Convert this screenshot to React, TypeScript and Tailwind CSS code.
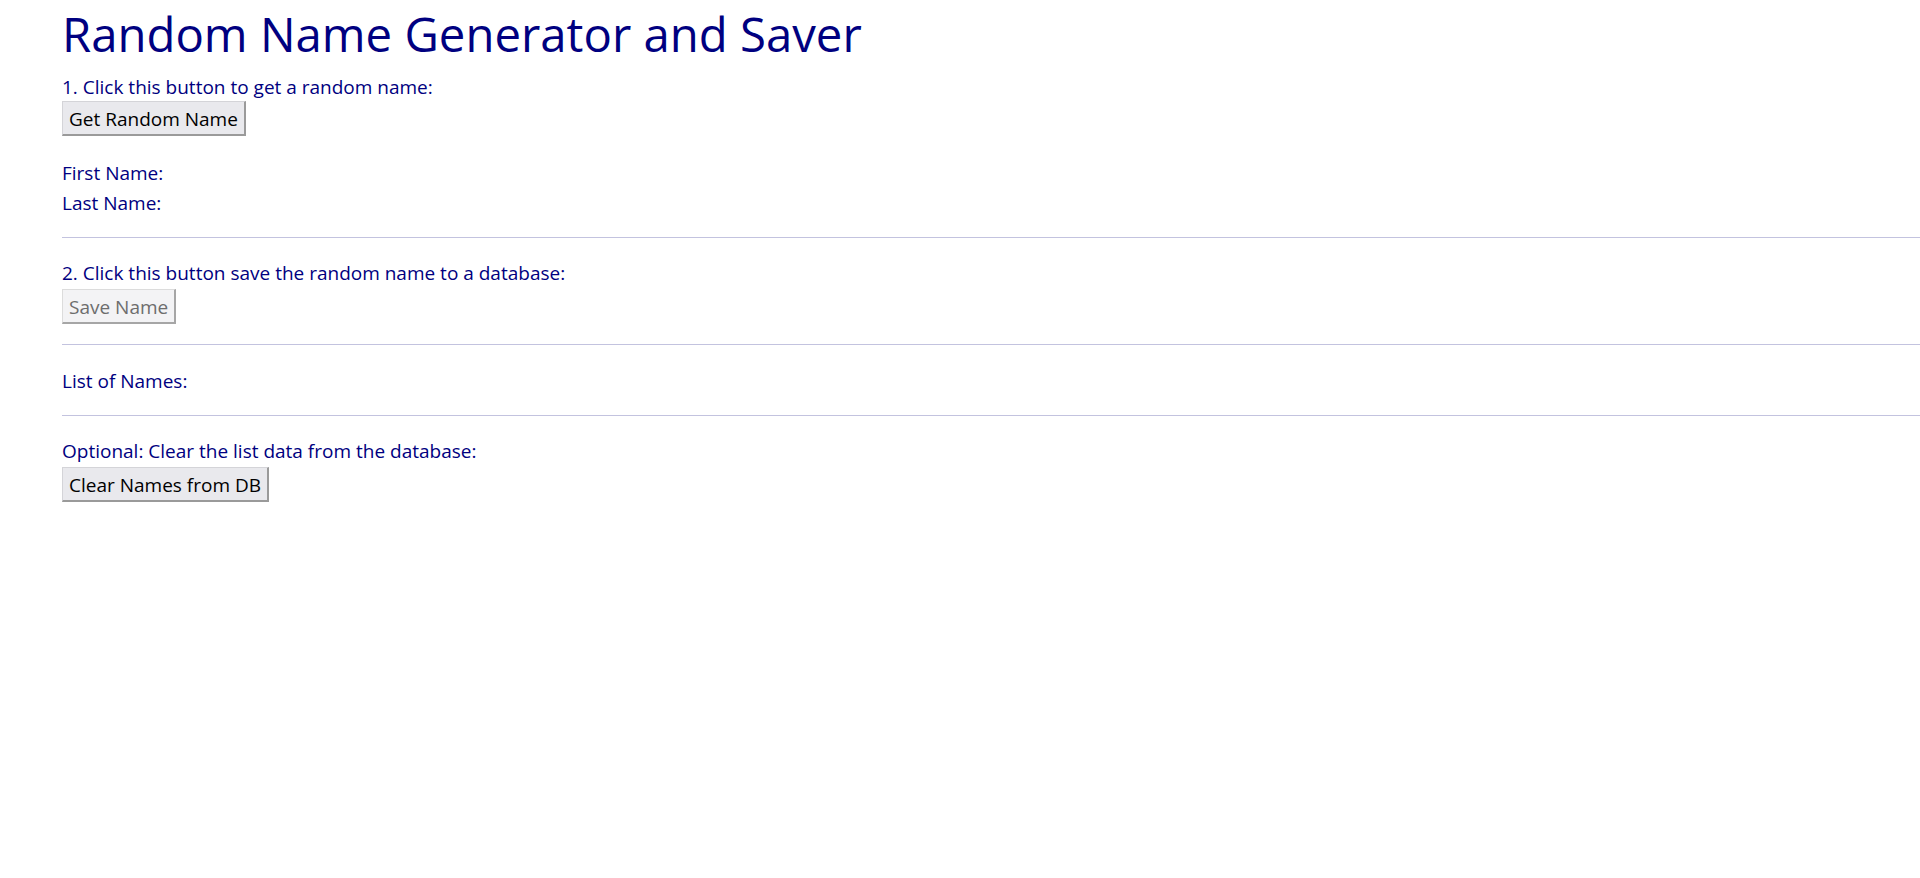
import React from "react";

const btn =
  "block h-[35px] px-[6px] pt-[2px] bg-[#e9e9ed] text-black text-[19px] leading-[28px] border-t border-l border-r-2 border-b-2 border-t-[#d4d4d8] border-l-[#d4d4d8] border-r-[#9a9a9a] border-b-[#9a9a9a]";

export default function App() {
  return (
    <div
      className="min-h-screen bg-white pl-[62px] text-[#000080]"
      style={{ fontFamily: '"Open Sans", "Noto Sans", sans-serif' }}
    >
      <h1 className="text-[47.3px] leading-[66px] pt-px h-[66px] font-normal m-0">
        Random Name Generator and Saver
      </h1>
      <p className="mt-[7px] text-[19px] leading-[28px]">
        1. Click this button to get a random name:
      </p>
      <button className={btn}>Get Random Name</button>
      <div className="mt-[22px] text-[19px] leading-[30px]">
        <div>First Name:</div>
        <div>Last Name:</div>
      </div>
      <div className="mt-[19px] h-px bg-[#c3c3df]" />
      <p className="mt-[21px] text-[19px] leading-[28px]">
        2. Click this button save the random name to a database:
      </p>
      <button
        disabled
        className="mt-[2px] block h-[35px] px-[6px] pt-[2px] bg-[#f3f3f5] text-[#6d6d6d] text-[19px] leading-[28px] border-t border-l border-r-2 border-b-2 border-t-[#dcdcdc] border-l-[#dcdcdc] border-r-[#a6a6a6] border-b-[#a6a6a6]"
      >
        Save Name
      </button>
      <div className="mt-[20px] h-px bg-[#c3c3df]" />
      <p className="mt-[21px] text-[19px] leading-[30px]">List of Names:</p>
      <div className="mt-[19px] h-px bg-[#c3c3df]" />
      <p className="mt-[21px] text-[19px] leading-[28px]">
        Optional: Clear the list data from the database:
      </p>
      <button className={"mt-[2px] " + btn}>Clear Names from DB</button>
    </div>
  );
}
